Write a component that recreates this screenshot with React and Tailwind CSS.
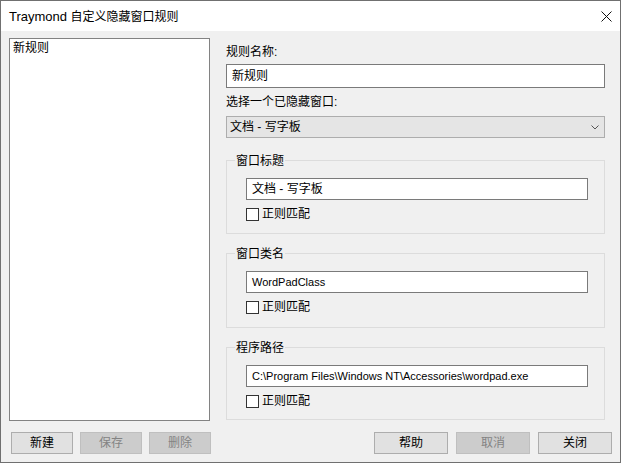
import React from "react";

const cjk = { fontFamily: '"Liberation Sans", "Noto Sans CJK SC", sans-serif' };

function GroupBox({ title, value, small }) {
  return (
    <div className="relative border border-[#dcdcdc] h-full pt-[17px] pl-[19px] pr-[16px]">
      <span className="absolute -top-[8px] left-[8px] px-[1px] bg-[#f0f0f0] text-[12px] leading-[16px] text-black">
        {title}
      </span>
      <div
        className={
          "h-[22px] bg-white border border-[#7a7a7a] flex items-center pl-[5px] text-black " +
          (small ? "text-[11px]" : "text-[12px]")
        }
      >
        {value}
      </div>
      <label className="mt-[7px] flex items-center gap-[3px] text-[12px] leading-[14px] text-black">
        <span className="w-[13px] h-[13px] border border-[#333333] bg-white"></span>
        正则匹配
      </label>
    </div>
  );
}

function Btn({ children, disabled, w }) {
  return (
    <button
      className={
        "h-[22px] text-[12px] leading-none border flex items-center justify-center " +
        w +
        (disabled
          ? " bg-[#cccccc] border-[#bfbfbf] text-[#838383]"
          : " bg-[#e1e1e1] border-[#adadad] text-black")
      }
    >
      {children}
    </button>
  );
}

export default function App() {
  return (
    <div style={cjk} className="w-[621px] h-[463px] border border-[#707070] bg-[#f0f0f0] flex flex-col">
      {/* title bar */}
      <div className="h-[30px] bg-white flex items-center justify-between pl-[8px] pr-[8px]">
        <span className="text-[12px] text-black pt-[1px]">
          <span className="text-[13px]">Traymond</span> 自定义隐藏窗口规则
        </span>
        <svg width="11" height="11" viewBox="0 0 11 11" className="mt-[1px]">
          <path d="M0.5 0.5 L10.5 10.5 M10.5 0.5 L0.5 10.5" stroke="#111" strokeWidth="1" />
        </svg>
      </div>

      {/* body */}
      <div className="flex-1 flex flex-col pt-[7px] px-[8px]">
        <div className="flex h-[383px]">
          <div className="w-[201px] h-full bg-white border border-[#828282] px-[3px] pt-[1px] text-[12px] leading-[16px] text-black">
            新规则
          </div>

          <div className="ml-[16px] w-[379px] flex flex-col">
            <div className="mt-[6px] h-[16px] text-[12px] leading-[16px] text-black">规则名称:</div>
            <div className="mt-[4px] h-[24px] bg-white border border-[#7a7a7a] flex items-center pl-[5px] text-[12px] text-black">
              新规则
            </div>
            <div className="mt-[6px] h-[16px] text-[12px] leading-[16px] text-black">选择一个已隐藏窗口:</div>
            <div className="mt-[6px] h-[22px] bg-[#e5e5e5] border border-[#adadad] flex items-center justify-between pl-[3px] pr-[5px] text-[12px] text-black">
              <span>文档 - 写字板</span>
              <svg width="8" height="5" viewBox="0 0 8 5">
                <path d="M0.5 0.5 L4 4 L7.5 0.5" stroke="#555" strokeWidth="1" fill="none" />
              </svg>
            </div>
            <div className="mt-[22px] h-[74px]">
              <GroupBox title="窗口标题" value="文档 - 写字板" />
            </div>
            <div className="mt-[19px] h-[75px]">
              <GroupBox title="窗口类名" value="WordPadClass" small />
            </div>
            <div className="mt-[19px] h-[73px]">
              <GroupBox title="程序路径" value="C:\Program Files\Windows NT\Accessories\wordpad.exe" small />
            </div>
          </div>
        </div>

        <div className="mt-[11px] flex items-center pl-[2px] pr-[0px]">
          <div className="flex gap-[7px]">
            <Btn w="w-[62px]">新建</Btn>
            <Btn w="w-[62px]" disabled>保存</Btn>
            <Btn w="w-[62px]" disabled>删除</Btn>
          </div>
          <div className="ml-auto flex gap-[8px]">
            <Btn w="w-[74px]">帮助</Btn>
            <Btn w="w-[74px]" disabled>取消</Btn>
            <Btn w="w-[74px]">关闭</Btn>
          </div>
        </div>
      </div>
    </div>
  );
}
